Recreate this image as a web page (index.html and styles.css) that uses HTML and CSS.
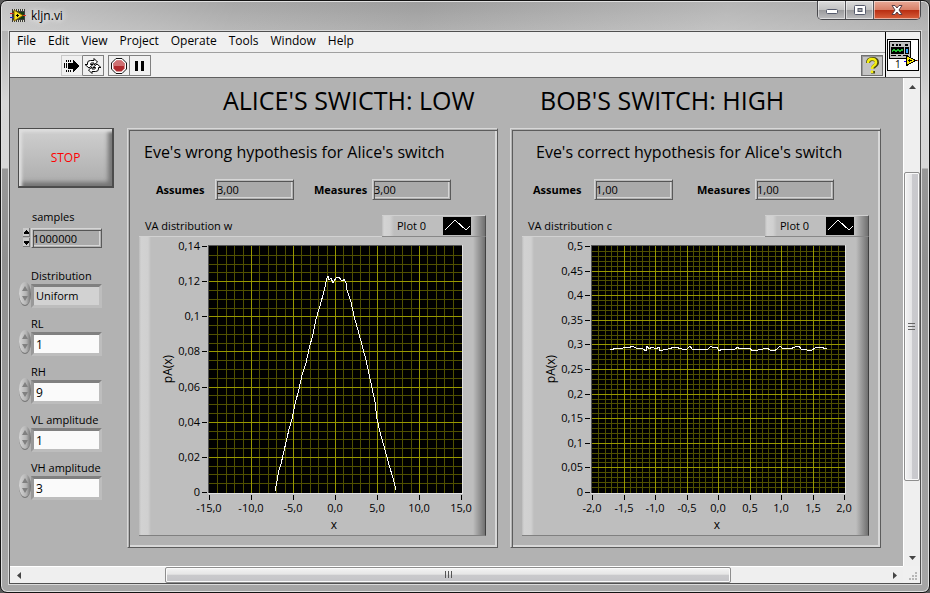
FILE: index.html
```html
<!DOCTYPE html>
<html lang="en">
<head>
<meta charset="utf-8">
<title>kljn.vi</title>
<link rel="stylesheet" href="styles.css">
</head>
<body>
<div class="window">
  <header class="titlebar">
    <svg class="app-icon" width="16" height="16" viewBox="0 0 16 16" shape-rendering="crispEdges">
      <path d="M2 1h13v13H2z" fill="#3a3a3a"/>
      <path d="M3 1h1v2H3zM5 1h1v2H5zM7 1h1v2H7zM9 1h1v2H9zM11 1h1v2h-1zM13 1h1v2h-1zM3 12h1v2H3zM5 12h1v2H5zM7 12h1v2H7zM9 12h1v2H9zM11 12h1v2h-1zM13 12h1v2h-1z" fill="#d8d8c8"/>
      <path d="M3 4h11v7H3z" fill="#143c14"/>
      <path d="M0 5h5v1H0z" fill="#d02020"/><path d="M0 9h5v1H0z" fill="#2020d0"/><path d="M12 7h4v1h-4z" fill="#e03020"/>
      <path d="M4 2l9 5.500-9 5.500z" fill="#f8e020" stroke="#7a5a00" shape-rendering="auto"/>
      <path d="M6 7h3v1H6zM7 6h1v3H7z" fill="#000"/>
    </svg>
    <h1 class="window-title">kljn.vi</h1>
    <div class="window-buttons">
      <button class="win-btn" aria-label="Minimize"><svg width="14" height="12" viewBox="0 0 14 12"><rect x="1.500" y="5.500" width="11" height="4" rx="1" fill="#fff" stroke="#555a6c"/></svg></button>
      <button class="win-btn" aria-label="Maximize"><svg width="14" height="12" viewBox="0 0 14 12"><rect x="1.500" y="1.500" width="11" height="9" rx="1" fill="#fff" stroke="#555a6c"/><rect x="5" y="4.500" width="4" height="3" fill="#aaa" stroke="#555a6c"/></svg></button>
      <button class="win-btn win-btn-close" aria-label="Close"><svg width="14" height="12" viewBox="0 0 14 12"><path d="M2 1.500h3l2 2.500 2-2.500h3L9 6l3 4.500H9L7 8l-2 2.500H2L5 6z" fill="#fff" stroke="#5a4048"/></svg></button>
    </div>
  </header>

  <div class="client">
    <div class="top-area">
      <div class="bars">
        <nav class="menubar">
          <button>File</button><button>Edit</button><button>View</button><button>Project</button><button>Operate</button><button>Tools</button><button>Window</button><button>Help</button>
        </nav>
        <div class="toolbar">
          <div class="tool-group">
            <button class="tool tool-running" aria-label="Running"><svg width="18" height="16" viewBox="0 0 18 16" shape-rendering="crispEdges"><path d="M5 5h5V2h1v1h1v1h1v1h1v1h1v1h1v2h-1v1h-1v1h-1v1h-1v1h-1v1h-1v-3H5z" fill="#000"/><path d="M1 5h1v5H1zM3 5h1v5H3zM3 2h1v2H3zM5 2h1v2H5zM7 2h1v2H7zM3 12h1v2H3zM5 12h1v2H5zM7 12h1v2H7z" fill="#000"/></svg></button>
            <button class="tool" aria-label="Run continuously"><svg width="18" height="16" viewBox="0 0 18 16" fill="#fff" stroke="#000"><path d="M3.500 6.500V5q0-2.500 3-2.500H10V.5l3.500 3.500-3.500 3V5H7.500q-1 0-1 1.500H9L5 10 1 6.500z"/><path d="M14.500 9.500V11q0 2.500-3 2.500H8v2L4.500 12 8 9v2h2.500q1 0 1-1.500H9L13 6l4 3.500z"/></svg></button>
          </div>
          <div class="tool-group">
            <button class="tool" aria-label="Abort execution"><svg width="18" height="18" viewBox="0 0 18 18"><path d="M6 1.500h6L16.500 6v6L12 16.500H6L1.500 12V6z" fill="#fff" stroke="#111"/><path d="M6.500 3.500h5l3 3v5l-3 3h-5l-3-3v-5z" fill="#b02a2e"/><path d="M6.500 3.500h5l3 3V9h-11V6.500z" fill="#cf7072"/></svg></button>
            <button class="tool" aria-label="Pause"><svg width="18" height="16" viewBox="0 0 18 16" shape-rendering="crispEdges"><path d="M4 3h3v10H4zM10 3h3v10h-3z" fill="#000"/></svg></button>
          </div>
          <button class="tool tool-help" aria-label="Context help"><svg width="16" height="18" viewBox="0 0 16 18" fill="none"><path d="M4 6q0-4 4.500-4T13 5.500q0 2-2.500 3.500-1.500 1-1.500 2.500M9 14v2.500" stroke="#4c4a10" stroke-width="4"/><path d="M4 6q0-4 4-4t4 3.500q0 2-2.500 3.500Q8 10 8 12M8 13.500V16" stroke="#f4ee10" stroke-width="2.500"/></svg></button>
        </div>
      </div>
      <div class="vi-icon">
        <svg width="32" height="32" viewBox="0 0 32 32" shape-rendering="crispEdges">
          <path d="M0 0h32v32H0z" fill="#000"/><path d="M1 1h30v30H1z" fill="#fff"/>
          <path d="M2 2h22v18H2z" fill="#000"/><path d="M3 3h20v16H3z" fill="#c0c0c0"/>
          <path d="M5 5h2v2H5zM9 5h2v2H9zM12 5h2v2h-2zM18 5h3v2h-3z" fill="#000"/>
          <path d="M4 8h13v7H4z" fill="#000"/><path d="M5 12.500l2-2 2 2 2-2 2 2 2-2 1 1" stroke="#20c030" fill="none"/>
          <path d="M18 8h4v7h-4z" fill="#000"/><path d="M19 10h2v4h-2z" fill="#30a0ff"/>
          <path d="M4 16h5v1H4zM11 16h3v1h-3zM16 16h5v1h-5z" fill="#000"/>
          <path d="M17 22h3v1h-3z" fill="#20f"/><path d="M28 21h3v1h-3z" fill="#e42"/>
          <path d="M19.500 16.500l9 5-9 5z" fill="#ffe800" stroke="#000"/><path d="M21 21h4v1h-4zM22 20h1v3h-1z" fill="#000"/>
          <text class="vi-number" x="8" y="29">1</text>
        </svg>
      </div>
    </div>

    <div class="work-area">
      <main class="panel">
        <aside class="controls">
          <button class="stop">STOP</button>
          <div class="control control-samples">
            <label for="samples">samples</label>
            <div class="control-row">
              <span class="stepper"><svg width="7" height="19" viewBox="0 0 7 19" shape-rendering="crispEdges"><path d="M0 0h7v9H0zM0 10h7v9H0z" fill="#777"/><path d="M0 0h6v8H0zM0 10h6v8H0z" fill="#cacaca"/><path d="M3 2h1v1h1v1h1v2H1V4h1V3h1zM1 13h5v2H5v1H4v1H3v-1H2v-1H1z" fill="#000"/></svg></span>
              <input id="samples" class="inset-box" value="1000000">
            </div>
          </div>
          <div class="control">
            <label for="dist">Distribution</label>
            <div class="control-row"><span class="knob"></span><select id="dist" class="field field-gray"><option>Uniform</option></select></div>
          </div>
          <div class="control">
            <label for="rl">RL</label>
            <div class="control-row"><span class="knob"></span><input id="rl" class="field" value="1"></div>
          </div>
          <div class="control">
            <label for="rh">RH</label>
            <div class="control-row"><span class="knob"></span><input id="rh" class="field" value="9"></div>
          </div>
          <div class="control">
            <label for="vl">VL amplitude</label>
            <div class="control-row"><span class="knob"></span><input id="vl" class="field" value="1"></div>
          </div>
          <div class="control">
            <label for="vh">VH amplitude</label>
            <div class="control-row"><span class="knob"></span><input id="vh" class="field" value="3"></div>
          </div>
        </aside>

        <section class="party party-alice">
          <h2>ALICE'S SWICTH: LOW</h2>
          <div class="group">
            <h3>Eve's wrong hypothesis for Alice's switch</h3>
            <div class="readings">
              <div class="reading"><label for="a1">Assumes</label><input id="a1" class="inset-box" value="3,00" readonly></div>
              <div class="reading"><label for="m1">Measures</label><input id="m1" class="inset-box" value="3,00" readonly></div>
            </div>
            <div class="chart-head">
              <span class="chart-name">VA distribution w</span>
              <span class="legend">Plot 0 <svg width="28" height="18" viewBox="0 0 28 18"><path d="M0 0h28v18H0z" fill="#000"/><path d="M2 13L12 3l11 10 4-4" fill="none" stroke="#fff" shape-rendering="crispEdges"/></svg></span>
            </div>
            <div class="chart" data-chart="wrong"></div>
          </div>
        </section>

        <section class="party party-bob">
          <h2>BOB'S SWITCH: HIGH</h2>
          <div class="group">
            <h3>Eve's correct hypothesis for Alice's switch</h3>
            <div class="readings">
              <div class="reading"><label for="a2">Assumes</label><input id="a2" class="inset-box" value="1,00" readonly></div>
              <div class="reading"><label for="m2">Measures</label><input id="m2" class="inset-box" value="1,00" readonly></div>
            </div>
            <div class="chart-head">
              <span class="chart-name">VA distribution c</span>
              <span class="legend">Plot 0 <svg width="28" height="18" viewBox="0 0 28 18"><path d="M0 0h28v18H0z" fill="#000"/><path d="M2 13L12 3l11 10 4-4" fill="none" stroke="#fff" shape-rendering="crispEdges"/></svg></span>
            </div>
            <div class="chart" data-chart="correct"></div>
          </div>
        </section>
      </main>

      <div class="scroll scroll-v">
        <span class="arrow"><svg width="7" height="4" viewBox="0 0 7 4"><path d="M0 4l3.500-4L7 4z" fill="#444"/></svg></span>
        <span class="track-before"></span>
        <span class="thumb"><svg width="8" height="8" viewBox="0 0 8 8"><path d="M0 1h7M0 4h7M0 7h7" stroke="#666" shape-rendering="crispEdges"/></svg></span>
        <span class="track-after"></span>
        <span class="arrow"><svg width="7" height="4" viewBox="0 0 7 4"><path d="M0 0l3.500 4L7 0z" fill="#444"/></svg></span>
      </div>
      <div class="scroll scroll-h">
        <span class="arrow"><svg width="4" height="7" viewBox="0 0 4 7"><path d="M4 0L0 3.500 4 7z" fill="#444"/></svg></span>
        <span class="track-before"></span>
        <span class="thumb"><svg width="8" height="8" viewBox="0 0 8 8"><path d="M1 0v7M4 0v7M7 0v7" stroke="#555" shape-rendering="crispEdges"/></svg></span>
        <span class="track-after"></span>
        <span class="arrow"><svg width="4" height="7" viewBox="0 0 4 7"><path d="M0 0l4 3.500L0 7z" fill="#444"/></svg></span>
      </div>
      <div class="grip"><svg width="9" height="9" viewBox="0 0 9 9" shape-rendering="crispEdges"><path d="M6 0h2v2H6zM3 3h2v2H3zM6 3h2v2H6zM0 6h2v2H0zM3 6h2v2H3zM6 6h2v2H6z" fill="#b8b8b8"/></svg></div>
    </div>
  </div>
</div>
<script src="chart.js"></script>
</body>
</html>
```

FILE: styles.css
```css
* { box-sizing: border-box; }

html, body { height: 100%; }

body {
  margin: 0;
  background: #5a5a5a;
  font-family: "Open Sans", "Noto Sans", sans-serif;
  font-size: 11px;
  line-height: 16px;
  color: #000;
}

button, input, select { font: inherit; color: inherit; margin: 0; }
button { background: none; border: 0; padding: 0; }
h1, h2, h3 { margin: 0; font-weight: 400; }
svg { display: block; flex: none; }

.window {
  min-height: 100vh;
  display: flex;
  flex-direction: column;
  padding: 0 8px 8px;
  border: 1px solid #141414;
  border-radius: 7px;
  background:
    linear-gradient(100deg, rgba(255,255,255,.35) 0, rgba(255,255,255,.05) 25%, rgba(0,0,0,.03) 45%, rgba(255,255,255,.2) 78%, rgba(255,255,255,.05) 100%) 0 0 / 100% 30px no-repeat,
    linear-gradient(#a2a2a2 0, #b4b4b4 30px, #d6d6d6 100px, #d8d8d8 167px, #989898 168px, #909090 260px, #a6a6a6 100%);
  box-shadow: inset 0 0 0 1px #e0e0e0;
}

.titlebar {
  height: 30px;
  flex: none;
  display: flex;
  align-items: center;
  padding-left: 1px;
}
.window-title {
  margin: 0 0 0 5px;
  font-size: 12px;
  text-shadow: 0 0 6px #fff, 0 0 8px #fff;
}
.window-buttons {
  align-self: flex-start;
  margin-left: auto;
  display: flex;
  border: 1px solid #48484c;
  border-top: 0;
  border-radius: 0 0 5px 5px;
  overflow: hidden;
}
.win-btn {
  width: 28px;
  height: 18px;
  display: flex;
  align-items: center;
  justify-content: center;
  border-right: 1px solid #55555a;
  background: linear-gradient(#dcdcdc 0, #c2c2c2 48%, #9a9a9c 50%, #bcbcbe 100%);
  box-shadow: inset 0 0 0 1px rgba(255,255,255,.5);
}
.win-btn-close {
  width: 46px;
  border-right: 0;
  background: linear-gradient(#e8aa98 0, #d88068 48%, #b82c10 50%, #d8603c 100%);
}

.client {
  flex: 1;
  display: flex;
  flex-direction: column;
  border: 1px solid #505050;
  box-shadow: 0 0 0 1px #dadada;
}

.top-area {
  display: flex;
  background: #f0f0f0;
  border-bottom: 1px solid #606060;
}
.bars { flex: 1; }
.menubar {
  display: flex;
  gap: 12px;
  height: 21px;
  padding: 0 7px 2px;
  border-bottom: 1px solid #a0a0a0;
  font-size: 12px;
}
.toolbar {
  height: 24px;
  display: flex;
  gap: 4px;
  padding: 2px 2px 1px 51px;
}
.tool-group { display: flex; }
.tool {
  width: 22px;
  height: 21px;
  display: flex;
  align-items: center;
  justify-content: center;
  border: 1px solid #808080;
}
.tool + .tool { width: 21px; border-left: 0; }
.tool-running { border-color: #c8c8c8 #808080 #c8c8c8 #c8c8c8; }
.tool-help {
  margin-left: auto;
  border: 1px solid #707070;
  background: #c4c4c4;
  box-shadow: inset 1px 1px 0 #999;
}
.vi-icon {
  width: 35px;
  border-left: 1px solid #000;
  display: flex;
  align-items: center;
  justify-content: center;
}
.vi-number { font-size: 10px; fill: #000; }

.work-area {
  flex: 1;
  display: grid;
  grid-template: 1fr 17px / 1fr 17px;
}

.panel {
  background: #b2b2b2;
  display: grid;
  grid-template-columns: 97px 1fr 1fr;
  align-content: start;
  column-gap: 12px;
  padding: 0 22px 18px 8px;
}

/* Left column */
.controls {
  padding-top: 50px;
  display: flex;
  flex-direction: column;
  gap: 8px;
}
.stop {
  width: 96px;
  height: 60px;
  border: 1px solid #4c4c4c;
  border-width: 1px 2px 2px 1px;
  color: #f00;
  font-size: 12px;
  background: linear-gradient(#cfcfcf, #acacac);
  box-shadow: inset 3px 3px 3px #dedede, inset -4px -4px 4px #757575;
}
.control label {
  display: block;
  padding-left: 13px;
  white-space: nowrap;
}
.control-row { height: 24px; display: flex; align-items: flex-start; }
.control-samples { margin: 13px 0 8px; }
.control-samples label { padding: 0 0 3px 14px; }
.stepper { padding: 0 1px 0 5px; }
.control-samples .inset-box { width: 71px; }

.inset-box {
  width: 79px;
  height: 21px;
  padding: 0 1px;
  border: 1px solid;
  border-color: #d6d6d6 #5a5a5a #5a5a5a #d6d6d6;
  border-radius: 0;
  background: #aaa;
  box-shadow: inset 1px 1px 0 #bbb, inset 2px 2px 0 #555, inset -1px -1px 0 #b0b0b0, inset -2px -2px 0 #d6d6d6;
  outline: 0;
}
.control-samples .inset-box { height: 20px; }

.knob {
  flex: none;
  width: 12px;
  height: 24px;
  margin: -2px 1px 0;
  border-radius: 50%;
  background: linear-gradient(90deg, #d6d6d6, #b4b4b4 60%, #707070);
  border-bottom: 1px solid #777;
  display: flex;
  flex-direction: column;
  align-items: center;
  justify-content: center;
  gap: 5px;
}
.knob::before, .knob::after {
  content: "";
  border: 3px solid transparent;
}
.knob::before { border-bottom: 5px solid #808080; border-top: 0; }
.knob::after { border-top: 5px solid #808080; border-bottom: 0; }

.field {
  appearance: none;
  width: 71px;
  height: 24px;
  margin-left: -1px;
  padding: 0 0 0 2px;
  border: 3px solid;
  border-color: #808080 #bdbdbd #bdbdbd #989898;
  border-radius: 0;
  background: #fafafa;
  font-size: 12px;
  outline: 0;
}
.field-gray { background: #d2d2d2; font-size: 11px; }

/* Alice and Bob */
.party h2 {
  height: 50px;
  font-size: 25px;
  line-height: 44px;
  white-space: nowrap;
}
.party-alice { --title: 96px; --heading: 14px; --start: 26px; --label: 59px; --between: 20px; }
.party-bob { --title: 30px; --heading: 23px; --start: 20px; --label: 61px; --between: 24px; }
.party h2 { padding-left: var(--title); }

.group {
  border: 1px solid;
  border-color: #d8d8d8 #5c5c5c #5c5c5c #d8d8d8;
  box-shadow: inset 1px 1px 0 #b2b2b2, inset 2px 2px 0 #5c5c5c, inset -2px -2px 0 #d8d8d8;
  padding: 11px;
}
.group h3 {
  padding-left: calc(var(--heading) - 9px);
  font-size: 16px;
  line-height: 25px;
  white-space: nowrap;
}
.readings {
  display: flex;
  gap: var(--between);
  padding: 14px 0 15px calc(var(--start) - 9px);
}
.reading { display: flex; align-items: center; }
.reading label { width: 58px; font-weight: 700; }
.reading:first-child label { width: var(--label); }

.chart-head {
  display: flex;
  justify-content: space-between;
  height: 21px;
}
.chart-name { padding: 3px 0 0 6px; }
.legend {
  width: 104px;
  height: 22px;
  display: flex;
  align-items: center;
  justify-content: space-between;
  padding: 0 14px 0 15px;
  border-top: 1px solid #d0d0d0;
  border-bottom: 1px solid #888;
  border-right: 1px solid #505050;
  background: linear-gradient(90deg, #bcbcbc 0, #d4d4d4 2px, #d0d0d0 8px, #bebebe 12px, #bebebe 90px, #707070 100%);
}
.chart {
  border-top: 1px solid #d2d2d2;
  border-bottom: 1px solid #808080;
  border-right: 1px solid #404040;
  background: linear-gradient(90deg, #bcbcbc 0, #d2d2d2 2px, #d0d0d0 9px, #bebebe 12px, #bebebe calc(100% - 12px), #707070 100%);
}
.chart svg { width: 100%; height: auto; font-size: 11px; }
.chart .end { text-anchor: end; }
.chart .mid { text-anchor: middle; }
.chart .axis-name { font-size: 12px; }

/* Scrollbars */
.scroll { display: flex; background: #efefef; }
.scroll-v { flex-direction: column; border-left: 1px solid #fff; }
.scroll-h { border-top: 1px solid #fff; }
.arrow {
  flex: 0 0 17px;
  display: flex;
  align-items: center;
  justify-content: center;
}
.thumb {
  display: flex;
  align-items: center;
  justify-content: center;
  border: 1px solid #8e8e8e;
  border-radius: 2px;
  box-shadow: inset 0 0 0 1px #fafafa;
}
.scroll-v .track-before { flex: 77; }
.scroll-v .thumb { flex: 309; background: linear-gradient(90deg, #f4f4f4 0, #e4e4e6 50%, #cacace 52%, #c8c8cc 100%); }
.scroll-v .track-after { flex: 68; }
.scroll-h .track-before { flex: 138; }
.scroll-h .thumb { flex: 566; background: linear-gradient(#f4f4f4 0, #e6e6e6 45%, #cacacc 50%, #c4c4c8 100%); }
.scroll-h .track-after { flex: 155; }
.grip {
  display: flex;
  align-items: flex-end;
  justify-content: flex-end;
  padding: 2px;
  background: #f0f0f0;
}
```

FILE: chart.js
```js
// Each chart: axis labels, minor divisions per major step, and the trace in plot units.
const charts = {
  wrong: {
    x: ["-15,0", "-10,0", "-5,0", "0,0", "5,0", "10,0", "15,0"],
    y: ["0,14", "0,12", "0,1", "0,08", "0,06", "0,04", "0,02", "0"],
    xMinor: 5, yMinor: 4,
    trace: "66,245 68,235 70,224 72,218 75,205 78,192 80,183 83,173 86,158 90,143 93,129 97,117 100,103 104,88 107,73 111,60 115,45 118,32 119,30 120,34 122,32 124,37 127,32 130,31 132,34 134,35 135,33 137,37 138,44 142,56 145,70 149,84 153,99 157,114 160,128 163,142 166,156 168,173 171,186 175,200 180,219 184,232 187,244"
  },
  correct: {
    x: ["-2,0", "-1,5", "-1,0", "-0,5", "0,0", "0,5", "1,0", "1,5", "2,0"],
    y: ["0,5", "0,45", "0,4", "0,35", "0,3", "0,25", "0,2", "0,15", "0,1", "0,05", "0"],
    xMinor: 5, yMinor: 5,
    trace: "18,103 20,104 23,102 31,102 34,101 36,102 41,100 45,103 48,102 51,103 54,105 55,100 57,103 60,101 64,103 67,101 68,105 71,104 76,103 83,101 90,103 95,103 98,100 100,103 105,103 113,104 116,103 119,100 121,102 125,101 127,105 130,103 135,103 138,103 143,103 146,101 147,103 151,102 158,102 160,105 163,104 166,104 171,103 175,102 178,104 182,105 185,103 188,100 190,102 198,103 203,101 207,100 210,104 213,103 215,104 220,104 223,102 228,101 235,103"
  }
};

const plot = { left: 70, top: 9, width: 252, height: 246 };

// The outermost lines coincide with the plot's frame, so only inner ones are drawn.
function gridLines(majors, minor, length, draw) {
  const cells = (majors - 1) * minor;
  let thin = "", thick = "";
  for (let i = 1; i < cells; i++) {
    const at = Math.round(i * length / cells);
    if (i % minor) thin += draw(at); else thick += draw(at);
  }
  return [thin, thick];
}

function render(c) {
  const { left, top, width, height } = plot;
  const [vThin, vThick] = gridLines(c.x.length, c.xMinor, width, p => `M${left + p + 0.5} ${top}v${height + 1}`);
  const [hThin, hThick] = gridLines(c.y.length, c.yMinor, height, p => `M${left} ${top + p + 0.5}h${width + 1}`);
  let out = `<rect x="${left - 1}" y="${top - 1}" width="${width + 3}" height="${height + 3}" fill="#e2e2e2"/>
    <path d="M${left - 1} ${top - 1}h${width + 2}v1h-${width + 1}v${height + 1}h-1z" fill="#555"/>
    <rect x="${left}" y="${top}" width="${width + 1}" height="${height + 1}" fill="#000"/>
    <path d="${vThin}${hThin}" stroke="#505000"/><path d="${vThick}${hThick}" stroke="#989800"/>
    <polyline points="${c.trace}" transform="translate(${left} ${top})" fill="none" stroke="#fff" shape-rendering="crispEdges"/>`;
  c.y.forEach((label, i) => {
    const y = top + Math.round(i * height / (c.y.length - 1));
    out += `<path d="M${left - 7} ${y + 0.5}h5" stroke="#000"/><text class="end" x="${left - 9}" y="${y + 4}">${label}</text>`;
  });
  c.x.forEach((label, i) => {
    const x = left + Math.round(i * width / (c.x.length - 1));
    out += `<path d="M${x + 0.5} ${top + height + 3}v5" stroke="#000"/><text class="mid" x="${x}" y="${top + height + 20}">${label}</text>`;
  });
  out += `<text class="mid axis-name" x="195" y="292">x</text><text class="mid axis-name" transform="translate(33 132) rotate(-90)">pA(x)</text>`;
  return `<svg viewBox="0 0 346 298">${out}</svg>`;
}

document.querySelectorAll(".chart").forEach(el => {
  el.innerHTML = render(charts[el.dataset.chart]);
});
```
